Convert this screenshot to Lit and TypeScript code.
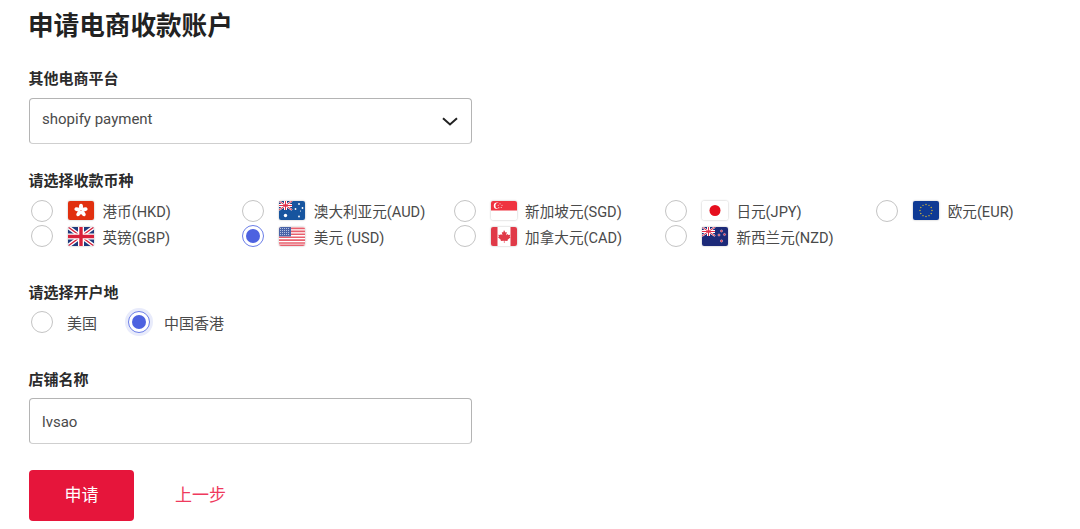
import { LitElement, html, css, svg } from "lit";
import { customElement } from "lit/decorators.js";

const flags: Record<string, unknown> = {
  hk: svg`<rect width="26" height="19" fill="#e1300f"/><g fill="#fff" transform="translate(13 9.5)">${[0, 72, 144, 216, 288].map(
    (a) => svg`<ellipse cx="0" cy="-3.6" rx="2" ry="3.2" transform="rotate(${a})"/>`
  )}</g>`,
  gb: svg`<rect width="26" height="19" fill="#1f3a7d"/><path d="M0 0L26 19M26 0L0 19" stroke="#fff" stroke-width="4"/><path d="M0 0L26 19M26 0L0 19" stroke="#d8203a" stroke-width="1.4"/><path d="M13 0V19M0 9.5H26" stroke="#fff" stroke-width="6"/><path d="M13 0V19M0 9.5H26" stroke="#d8203a" stroke-width="3.4"/>`,
  au: svg`<rect width="26" height="19" fill="#17559f"/><g><rect width="13" height="9" fill="#1f3a7d"/><path d="M0 0L13 9M13 0L0 9" stroke="#fff" stroke-width="2"/><path d="M6.5 0V9M0 4.5H13" stroke="#fff" stroke-width="3"/><path d="M6.5 0V9M0 4.5H13M0 0L13 9M13 0L0 9" stroke="#e0304a" stroke-width="1"/></g><g fill="#fff"><circle cx="6.5" cy="14.5" r="1.7"/><circle cx="20" cy="3" r=".9"/><circle cx="20" cy="15.5" r=".9"/><circle cx="16.5" cy="8" r=".9"/><circle cx="23.5" cy="7" r=".9"/><circle cx="21.5" cy="10" r=".6"/></g>`,
  us: svg`<rect width="26" height="19" fill="#fff"/><path d="M0 1.4H26M0 4.4H26M0 7.3H26M0 10.2H26M0 13.1H26M0 16H26M0 18.4H26" stroke="#e8606e" stroke-width="1.6"/><rect width="12" height="9.4" fill="#4a64a8"/><g fill="#c8d4ee">${[1.5, 3.5, 5.5, 7.5].map((y) =>
    [1.5, 3.5, 5.5, 7.5, 9.5].map((x) => svg`<circle cx="${x}" cy="${y}" r=".55"/>`)
  )}</g>`,
  sg: svg`<rect width="26" height="19" fill="#fff"/><rect width="26" height="9.5" fill="#ef3340"/><circle cx="6" cy="4.8" r="3.2" fill="#fff"/><circle cx="7.4" cy="4.8" r="3" fill="#ef3340"/><g fill="#fff"><circle cx="9" cy="2.8" r=".5"/><circle cx="11" cy="4.2" r=".5"/><circle cx="10.2" cy="6.5" r=".5"/><circle cx="7.8" cy="6.5" r=".5"/><circle cx="7.2" cy="4.2" r=".5"/></g>`,
  ca: svg`<rect width="26" height="19" fill="#fff"/><rect width="6.5" height="19" fill="#e03a48"/><rect x="19.5" width="6.5" height="19" fill="#e03a48"/><path fill="#e03a48" d="M13 3l1.4 2.6 1.4-.7-.6 3.4 1.6-1.4.5 1.2 2-.3-.6 2 .9.5-3.2 2.6.4 1.2-3.3-.4v2.3h-.6v-2.3l-3.3.4.4-1.2L7 10.3l.9-.5-.6-2 2 .3.5-1.2 1.6 1.4-.6-3.4 1.4.7z"/>`,
  jp: svg`<rect width="26" height="19" fill="#fff"/><circle cx="13" cy="9.5" r="5.5" fill="#e60f1e"/>`,
  nz: svg`<rect width="26" height="19" fill="#1c2a78"/><rect width="13" height="9" fill="#1c2a78"/><path d="M0 0L13 9M13 0L0 9" stroke="#fff" stroke-width="2"/><path d="M6.5 0V9M0 4.5H13" stroke="#fff" stroke-width="3"/><path d="M6.5 0V9M0 4.5H13M0 0L13 9M13 0L0 9" stroke="#e0304a" stroke-width="1"/><g fill="#e0304a" stroke="#fff" stroke-width=".4"><circle cx="19.5" cy="4" r="1.1"/><circle cx="17" cy="8" r="1.1"/><circle cx="22.5" cy="7.5" r="1.1"/><circle cx="19.5" cy="14" r="1.2"/></g>`,
  eu: svg`<rect width="26" height="19" fill="#0f3a94"/><g fill="#e5c22e">${Array.from({ length: 12 }, (_, i) => {
    const a = (i * Math.PI) / 6;
    return svg`<circle cx="${13 + 6 * Math.cos(a)}" cy="${9.5 + 6 * Math.sin(a)}" r=".65"/>`;
  })}</g>`,
};

const currencies = [
  ["hk", "港币(HKD)", false],
  ["au", "澳大利亚元(AUD)", false],
  ["sg", "新加坡元(SGD)", false],
  ["jp", "日元(JPY)", false],
  ["eu", "欧元(EUR)", false],
  ["gb", "英镑(GBP)", false],
  ["us", "美元 (USD)", true],
  ["ca", "加拿大元(CAD)", false],
  ["nz", "新西兰元(NZD)", false],
] as const;

@customElement("app-root")
export class AppRoot extends LitElement {
  static styles = css`
    :host {
      display: block;
      height: 529px;
      overflow: hidden;
      background: #fff;
      color: #262626;
      font-family: Roboto, "Noto Sans CJK SC", sans-serif;
      font-size: 15px;
    }
    .page {
      display: flex;
      flex-direction: column;
      align-items: flex-start;
      padding: 8px 0 0 29px;
    }
    h1 {
      margin: 0 0 0 -1px;
      height: 36px;
      font-size: 25.6px;
      line-height: 36px;
      font-weight: 700;
      color: #222;
    }
    .label {
      margin-left: -0.5px;
      font-size: 15px;
      font-weight: 700;
      line-height: 22px;
      color: #2b2b2b;
    }
    .l1 { margin-top: 24px; }
    .l2 { margin-top: 26px; }
    .l3 { margin-top: 33px; }
    .l4 { margin-top: 34px; }
    .field {
      box-sizing: border-box;
      width: 443px;
      height: 46px;
      margin-top: 7px;
      padding: 1px 12px 0;
      display: flex;
      align-items: center;
      justify-content: space-between;
      border: 1px solid #b4b4b4;
      border-bottom-color: #cfcfcf;
      border-radius: 4px;
      font-size: 15px;
      color: #4a4a4a;
    }
    .select {
      margin-top: 8px;
      padding-top: 0;
      padding-bottom: 4px;
      padding-right: 13px;
    }
    .select svg { margin-top: 5px; }
    .grid {
      display: grid;
      grid-template-columns: repeat(5, 211.3px);
      grid-auto-rows: 25.5px;
      margin-top: 6px;
      margin-left: 2px;
    }
    .opt {
      display: flex;
      align-items: center;
      font-size: 14.6px;
      color: #4a4a4a;
      white-space: nowrap;
    }
    .radio {
      box-sizing: border-box;
      flex: none;
      width: 22px;
      height: 22px;
      border-radius: 50%;
      border: 1.5px solid #c4c4c4;
      background: #fff;
      display: flex;
      align-items: center;
      justify-content: center;
    }
    .radio.on { border-color: #6b7ee8; }
    .radio.on::after {
      content: "";
      width: 14px;
      height: 14px;
      border-radius: 50%;
      background: #4d62e0;
    }
    .radio.focus { box-shadow: 0 0 0 3px #e8ebfb; }
    .flag {
      flex: none;
      width: 26px;
      height: 19px;
      margin: 0 8.5px 0 15px;
      border-radius: 2px;
      box-shadow: 0 0 2px #b0b0b0;
      display: block;
    }
    .places {
      display: flex;
      margin-top: 5px;
      margin-left: 2px;
      height: 26px;
      align-items: center;
      font-size: 15px;
      color: #4a4a4a;
    }
    .places .radio + span { margin-left: 14px; }
    .places .gap { margin-left: 31px; }
    .actions {
      display: flex;
      align-items: center;
      margin-top: 26px;
    }
    .btn {
      width: 105px;
      height: 51px;
      border: 0;
      border-radius: 4px;
      background: #e6153b;
      color: #fff;
      font: inherit;
      font-size: 17px;
      padding: 0 0 5px;
    }
    .back {
      margin-left: 41px;
      padding-bottom: 5px;
      color: #ef3a5d;
      font-size: 17px;
    }
  `;

  render() {
    return html`
      <div class="page">
        <h1>申请电商收款账户</h1>
        <div class="label l1">其他电商平台</div>
        <div class="field select">
          <span>shopify payment</span>
          <svg width="16" height="9" viewBox="0 0 16 9"><path d="M1 1.2L8 7.4L15 1.2" fill="none" stroke="#222" stroke-width="2"/></svg>
        </div>
        <div class="label l2">请选择收款币种</div>
        <div class="grid">
          ${currencies.map(
            ([f, t, on]) => html`<div class="opt">
              <span class="radio ${on ? "on" : ""}"></span>
              <svg class="flag" viewBox="0 0 26 19">${flags[f]}</svg>
              <span>${t}</span>
            </div>`
          )}
        </div>
        <div class="label l3">请选择开户地</div>
        <div class="places">
          <span class="radio"></span><span>美国</span>
          <span class="radio on focus gap"></span><span>中国香港</span>
        </div>
        <div class="label l4">店铺名称</div>
        <div class="field">lvsao</div>
        <div class="actions">
          <button class="btn">申请</button>
          <span class="back">上一步</span>
        </div>
      </div>
    `;
  }
}
